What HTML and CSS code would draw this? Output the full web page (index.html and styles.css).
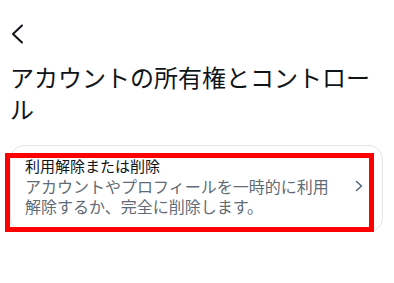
FILE: index.html
```html
<!DOCTYPE html>
<html lang="ja">
<head>
<meta charset="utf-8">
<title>アカウントの所有権とコントロール</title>
<link rel="stylesheet" href="styles.css">
</head>
<body>
<div class="page">
  <header class="topbar">
    <button class="back" aria-label="戻る">
      <svg width="14" height="20" viewBox="0 0 14 20"><path d="M12 1.5 L3 10 L12 18.5" fill="none" stroke="#0f1419" stroke-width="2" stroke-linecap="round" stroke-linejoin="round"/></svg>
    </button>
  </header>
  <h1 class="title">アカウントの所有権とコントロール</h1>
  <div class="card-wrap">
    <a class="card" href="#">
      <div class="card-text">
        <div class="card-title">利用解除または削除</div>
        <div class="card-sub">アカウントやプロフィールを一時的に利用解除するか、完全に削除します。</div>
      </div>
      <svg class="chev" width="8" height="12" viewBox="0 0 8 12"><path d="M1.5 1.5 L6.5 6 L1.5 10.5" fill="none" stroke="#536471" stroke-width="1.5" stroke-linecap="round" stroke-linejoin="round"/></svg>
    </a>
    <div class="highlight"></div>
  </div>
</div>
</body>
</html>
```
FILE: styles.css
```css
* { box-sizing: border-box; }
html, body {
  margin: 0;
  background: #ffffff;
}
body {
  font-family: "Noto Sans CJK JP", "Noto Sans", sans-serif;
  color: #0f1419;
}
.page {
  padding: 0 11px 0 10px;
}
.topbar {
  display: flex;
  align-items: center;
  height: 50px;
  margin-top: 9px;
}
.back {
  display: flex;
  align-items: center;
  padding: 0;
  margin: 0;
  border: 0;
  background: none;
}
.back svg { display: block; }
.title {
  margin: 2px 0 0;
  font-size: 24px;
  line-height: 32px;
  font-weight: 400;
}
.card-wrap {
  position: relative;
  margin-top: 20px;
}
.card {
  display: flex;
  align-items: center;
  gap: 14px;
  border: 1px solid #e3e5e9;
  border-radius: 14px;
  padding: 10px 19px 15px 14px;
  text-decoration: none;
  color: inherit;
}
.card-text {
  flex: 1;
  min-width: 0;
}
.card-title {
  font-size: 15px;
  line-height: 20px;
  font-weight: 400;
  color: #0f1419;
}
.card-sub {
  font-size: 16px;
  line-height: 20px;
  color: #5f6b76;
}
.chev {
  display: block;
  flex: none;
}
.highlight {
  position: absolute;
  left: -5px;
  top: 8px;
  width: 369px;
  height: 79px;
  border: 5px solid #ff0000;
  pointer-events: none;
}
```
